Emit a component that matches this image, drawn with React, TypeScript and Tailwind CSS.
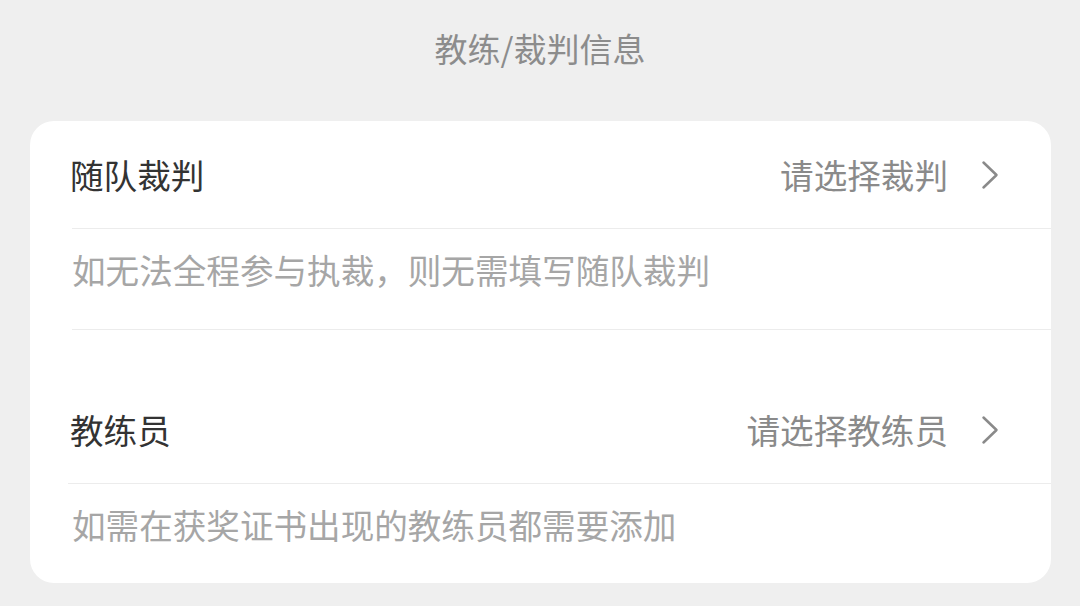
import React from "react";

const font = { fontFamily: '"Noto Sans CJK SC", "Noto Sans", sans-serif' };

function Chevron() {
  return (
    <svg width="18" height="30" viewBox="0 0 18 30" className="shrink-0">
      <path d="M2.5 2.5 L15.5 15 L2.5 27.5" fill="none" stroke="#8a8a8a" strokeWidth="2.5" strokeLinecap="round" strokeLinejoin="round" />
    </svg>
  );
}

function SelectRow({ label, placeholder, h }: { label: string; placeholder: string; h: string }) {
  return (
    <div className={`${h} flex items-center justify-between pl-[40px] pr-[52px]`}>
      <span className="text-[33.6px] leading-[40px] text-[#333333]">{label}</span>
      <div className="flex items-center gap-[33px]">
        <span className="text-[33.6px] leading-[40px] text-[#8a8a8a]">{placeholder}</span>
        <Chevron />
      </div>
    </div>
  );
}

export default function App() {
  return (
    <div className="w-[1080px] h-[606px] bg-[#efefef] overflow-hidden flex flex-col" style={font}>
      <div className="h-[96px] flex items-center justify-center">
        <span className="text-[33px] leading-[40px] text-[#8c8c8c]">教练/裁判信息</span>
      </div>
      <div className="mt-[25px] ml-[30px] w-[1021px] bg-white rounded-[24px] flex flex-col">
        <SelectRow label="随队裁判" placeholder="请选择裁判" h="h-[107px]" />
        <div className="ml-[42px] h-px bg-[#ececec]" />
        <div className="h-[100px] pl-[42px] pt-[21px]">
          <span className="text-[33.6px] leading-[40px] text-[#a6a6a6]">如无法全程参与执裁，则无需填写随队裁判</span>
        </div>
        <div className="ml-[42px] h-px bg-[#ececec]" />
        <div className="h-[46px]" />
        <SelectRow label="教练员" placeholder="请选择教练员" h="h-[107px]" />
        <div className="ml-[38px] h-px bg-[#ececec]" />
        <div className="h-[99px] pl-[42px] pt-[21px]">
          <span className="text-[33.6px] leading-[40px] text-[#a6a6a6]">如需在获奖证书出现的教练员都需要添加</span>
        </div>
      </div>
    </div>
  );
}
